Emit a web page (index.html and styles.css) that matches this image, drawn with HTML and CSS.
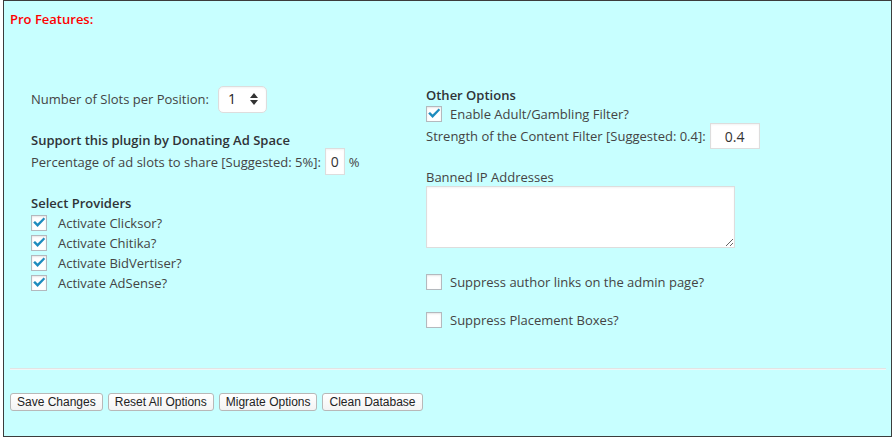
FILE: index.html
```html
<!DOCTYPE html>
<html>
<head>
<meta charset="utf-8">
<link rel="stylesheet" href="styles.css">
</head>
<body>
<div class="box">
  <div class="title">Pro Features:</div>
  <div class="columns">
    <div class="col col-left">
      <div class="row row-slots">
        <span>Number of Slots per Position:</span>
        <span class="select"><span class="sel-val">1</span>
          <svg class="sel-arrows" width="8" height="12" viewBox="0 0 8 12"><path d="M4 0 L8 5 L0 5 Z M0 7 L8 7 L4 12 Z" fill="#333"/></svg>
        </span>
      </div>
      <div class="heading h-support">Support this plugin by Donating Ad Space</div>
      <div class="row row-pct">
        <span>Percentage of ad slots to share [Suggested: 5%]:</span>
        <span class="input input-pct">0</span>
        <span class="pct">%</span>
      </div>
      <div class="heading h-providers">Select Providers</div>
      <div class="check left first"><span class="cb"><svg width="16" height="16" viewBox="0 0 16 16"><path d="M2.2 7.6 L4 5.9 L6.6 8.6 L12.6 2.4 L14.2 4.1 L6.6 11.9 Z" fill="#1e8cbe"/></svg></span><span>Activate Clicksor?</span></div>
      <div class="check left"><span class="cb"><svg width="16" height="16" viewBox="0 0 16 16"><path d="M2.2 7.6 L4 5.9 L6.6 8.6 L12.6 2.4 L14.2 4.1 L6.6 11.9 Z" fill="#1e8cbe"/></svg></span><span>Activate Chitika?</span></div>
      <div class="check left"><span class="cb"><svg width="16" height="16" viewBox="0 0 16 16"><path d="M2.2 7.6 L4 5.9 L6.6 8.6 L12.6 2.4 L14.2 4.1 L6.6 11.9 Z" fill="#1e8cbe"/></svg></span><span>Activate BidVertiser?</span></div>
      <div class="check left"><span class="cb"><svg width="16" height="16" viewBox="0 0 16 16"><path d="M2.2 7.6 L4 5.9 L6.6 8.6 L12.6 2.4 L14.2 4.1 L6.6 11.9 Z" fill="#1e8cbe"/></svg></span><span>Activate AdSense?</span></div>
    </div>
    <div class="col col-right">
      <div class="heading h-other">Other Options</div>
      <div class="check right"><span class="cb"><svg width="16" height="16" viewBox="0 0 16 16"><path d="M2.2 7.6 L4 5.9 L6.6 8.6 L12.6 2.4 L14.2 4.1 L6.6 11.9 Z" fill="#1e8cbe"/></svg></span><span>Enable Adult/Gambling Filter?</span></div>
      <div class="row row-strength">
        <span>Strength of the Content Filter [Suggested: 0.4]:</span>
        <span class="input input-strength">0.4</span>
      </div>
      <div class="label h-banned">Banned IP Addresses</div>
      <textarea class="ta"></textarea>
      <div class="check right c-author"><span class="cb"></span><span>Suppress author links on the admin page?</span></div>
      <div class="check right c-boxes"><span class="cb"></span><span>Suppress Placement Boxes?</span></div>
    </div>
  </div>
  <div class="rule"></div>
  <div class="buttons">
    <button class="btn">Save Changes</button>
    <button class="btn">Reset All Options</button>
    <button class="btn">Migrate Options</button>
    <button class="btn">Clean Database</button>
  </div>
</div>
</body>
</html>
```

FILE: styles.css
```css
html, body {
  margin: 0;
  padding: 0;
  background: #ffffff;
}
body {
  font-family: "Open Sans", "Noto Sans", sans-serif;
  font-size: 13px;
  color: #444;
}
.box {
  margin-left: 3px;
  width: 889px;
  height: 437px;
  box-sizing: border-box;
  border: 1px solid #3c3c3c;
  background: #c8ffff;
  padding: 9px 0 0 6px;
}
.title {
  color: #ff0000;
  font-weight: 600;
  line-height: 18px;
  height: 18px;
}
.columns {
  display: grid;
  grid-template-columns: 395px 1fr;
  margin-top: 57px;
  padding-left: 21px;
  height: 245px;
}
.col {
  display: flex;
  flex-direction: column;
  align-items: flex-start;
}
.row {
  display: flex;
  align-items: center;
}
.heading {
  font-weight: 600;
  color: #2f3337;
  line-height: 18px;
}
.label {
  line-height: 18px;
}
.row-slots {
  height: 28px;
}
.select {
  margin-left: 9px;
  width: 49px;
  height: 27px;
  box-sizing: border-box;
  background: #fff;
  border: 1px solid #ddd;
  border-radius: 5px;
  display: flex;
  align-items: center;
  justify-content: space-between;
  padding: 0 8px 0 9px;
  font-size: 14px;
  color: #222;
  box-shadow: inset 0 1px 2px rgba(0,0,0,0.05);
}
.sel-val { line-height: 18px; }
.h-support { margin-top: 18px; }
.row-pct {
  height: 27px;
  margin-top: -1px;
}
.input {
  background: #fff;
  border: 1px solid #ddd;
  box-sizing: border-box;
  display: flex;
  align-items: center;
  justify-content: center;
  font-size: 14px;
  color: #333;
  box-shadow: inset 0 1px 2px rgba(0,0,0,0.05);
}
.input-pct {
  width: 20px;
  height: 27px;
  margin-left: 4px;
}
.pct { margin-left: 4px; }
.h-providers { margin-top: 19px; }
.check {
  display: flex;
  align-items: center;
  height: 20px;
}
.check.first { margin-top: 1px; }
.cb {
  width: 16px;
  height: 16px;
  box-sizing: border-box;
  border: 1px solid #b4b9be;
  background: #fff;
  box-shadow: inset 0 1px 2px rgba(0,0,0,0.1);
  position: relative;
  flex: none;
}
.cb svg {
  position: absolute;
  left: -1px;
  top: -1px;
}
.check.left .cb { margin-right: 11px; }
.check.right .cb { margin-right: 8px; }
.h-other { margin-top: 1px; }
.row-strength {
  height: 26px;
  margin-top: -1px;
}
.input-strength {
  width: 50px;
  height: 26px;
  margin-left: 4px;
}
.h-banned { margin-top: 19px; }
.ta {
  display: block;
  width: 309px;
  height: 62px;
  box-sizing: border-box;
  border: 1px solid #ddd;
  background: #fff;
  margin: 0;
  padding: 2px 6px;
  resize: both;
  box-shadow: inset 0 1px 2px rgba(0,0,0,0.05);
}
.c-author { margin-top: 24px; }
.c-boxes { margin-top: 18px; }
.rule {
  width: 876px;
  height: 0;
  border-top: 1px solid #e2e4e4;
  border-bottom: 1px solid #f2f6f6;
  margin-top: 38px;
}
.buttons {
  display: flex;
  gap: 5px;
  margin-top: 23px;
}
.btn {
  font-family: "Liberation Sans", Arial, sans-serif;
  font-size: 12px;
  color: #222;
  height: 18px;
  padding: 0 6px;
  border: 1px solid #b8b8b8;
  border-radius: 3px;
  background: linear-gradient(#ffffff, #f3f3f3);
  line-height: 16px;
  margin: 0;
}
```
